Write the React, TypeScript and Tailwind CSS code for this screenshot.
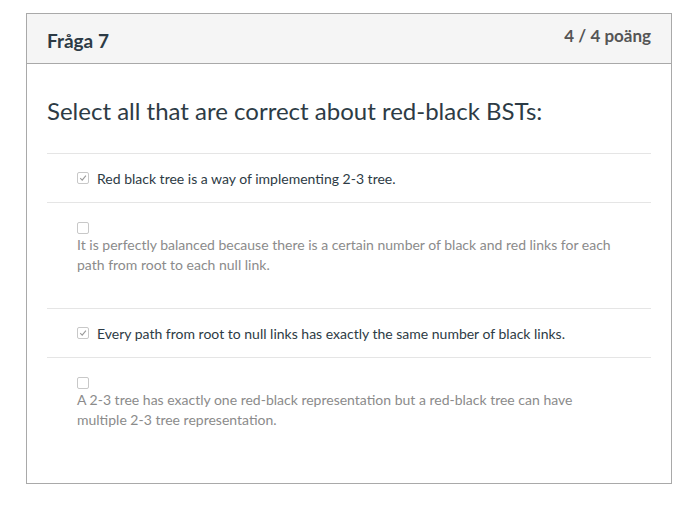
import React from "react";

function Check({ checked }: { checked: boolean }) {
  return (
    <span className="inline-flex h-[12px] w-[12px] shrink-0 items-center justify-center rounded-[2px] border border-[#c8c8c8] bg-white">
      {checked && (
        <svg width="8" height="8" viewBox="0 0 8 8" fill="none">
          <path d="M1.2 4.2 L3.2 6.1 L6.9 1.6" stroke="#9a9a9a" strokeWidth="1.1" />
        </svg>
      )}
    </span>
  );
}

export default function App() {
  const font = { fontFamily: "Lato, 'Open Sans', sans-serif" };
  return (
    <div className="min-h-[519px] bg-white pl-[26px] pt-[13px]" style={font}>
      <div className="w-[646px] h-[471px] border border-[#a9a9a9] bg-white">
        <div className="flex h-[50px] items-start justify-between border-b border-[#a9a9a9] bg-[#f5f5f5] px-[20px]">
          <div className="pt-[16px] text-[19px] font-bold leading-[22px] text-[#2d3b45]">Fråga 7</div>
          <div className="pt-[12px] text-[17px] font-bold leading-[20px] text-[#555]">4 / 4 poäng</div>
        </div>
        <div className="px-[20px]">
          <div className="pt-[30px] pb-[25px] text-[24px] leading-[34px] text-[#2d3b45]">
            Select all that are correct about red-black BSTs:
          </div>
          <div className="border-t border-[#e5e5e5]">
            <div className="flex h-[49px] items-center gap-[8px] border-b border-[#e5e5e5] pl-[30px] text-[14px] text-[#2d3b45]">
              <Check checked />
              <span>Red black tree is a way of implementing 2-3 tree.</span>
            </div>
            <div className="h-[106px] border-b border-[#e5e5e5] pl-[30px] pt-[19px] text-[14px] leading-[20px] text-[#8b8b8b]">
              <div className="h-[13px] flex items-start"><Check checked={false} /></div>
              <div className="w-[545px]">
                It is perfectly balanced because there is a certain number of black and red links for each path from root to each null link.
              </div>
            </div>
            <div className="flex h-[49px] items-center gap-[8px] border-b border-[#e5e5e5] pl-[30px] text-[14px] text-[#2d3b45]">
              <Check checked />
              <span>Every path from root to null links has exactly the same number of black links.</span>
            </div>
            <div className="pl-[30px] pt-[19px] text-[14px] leading-[20px] text-[#8b8b8b]">
              <div className="h-[13px] flex items-start"><Check checked={false} /></div>
              <div className="w-[520px]">
                A 2-3 tree has exactly one red-black representation but a red-black tree can have multiple 2-3 tree representation.
              </div>
            </div>
          </div>
        </div>
      </div>
    </div>
  );
}
